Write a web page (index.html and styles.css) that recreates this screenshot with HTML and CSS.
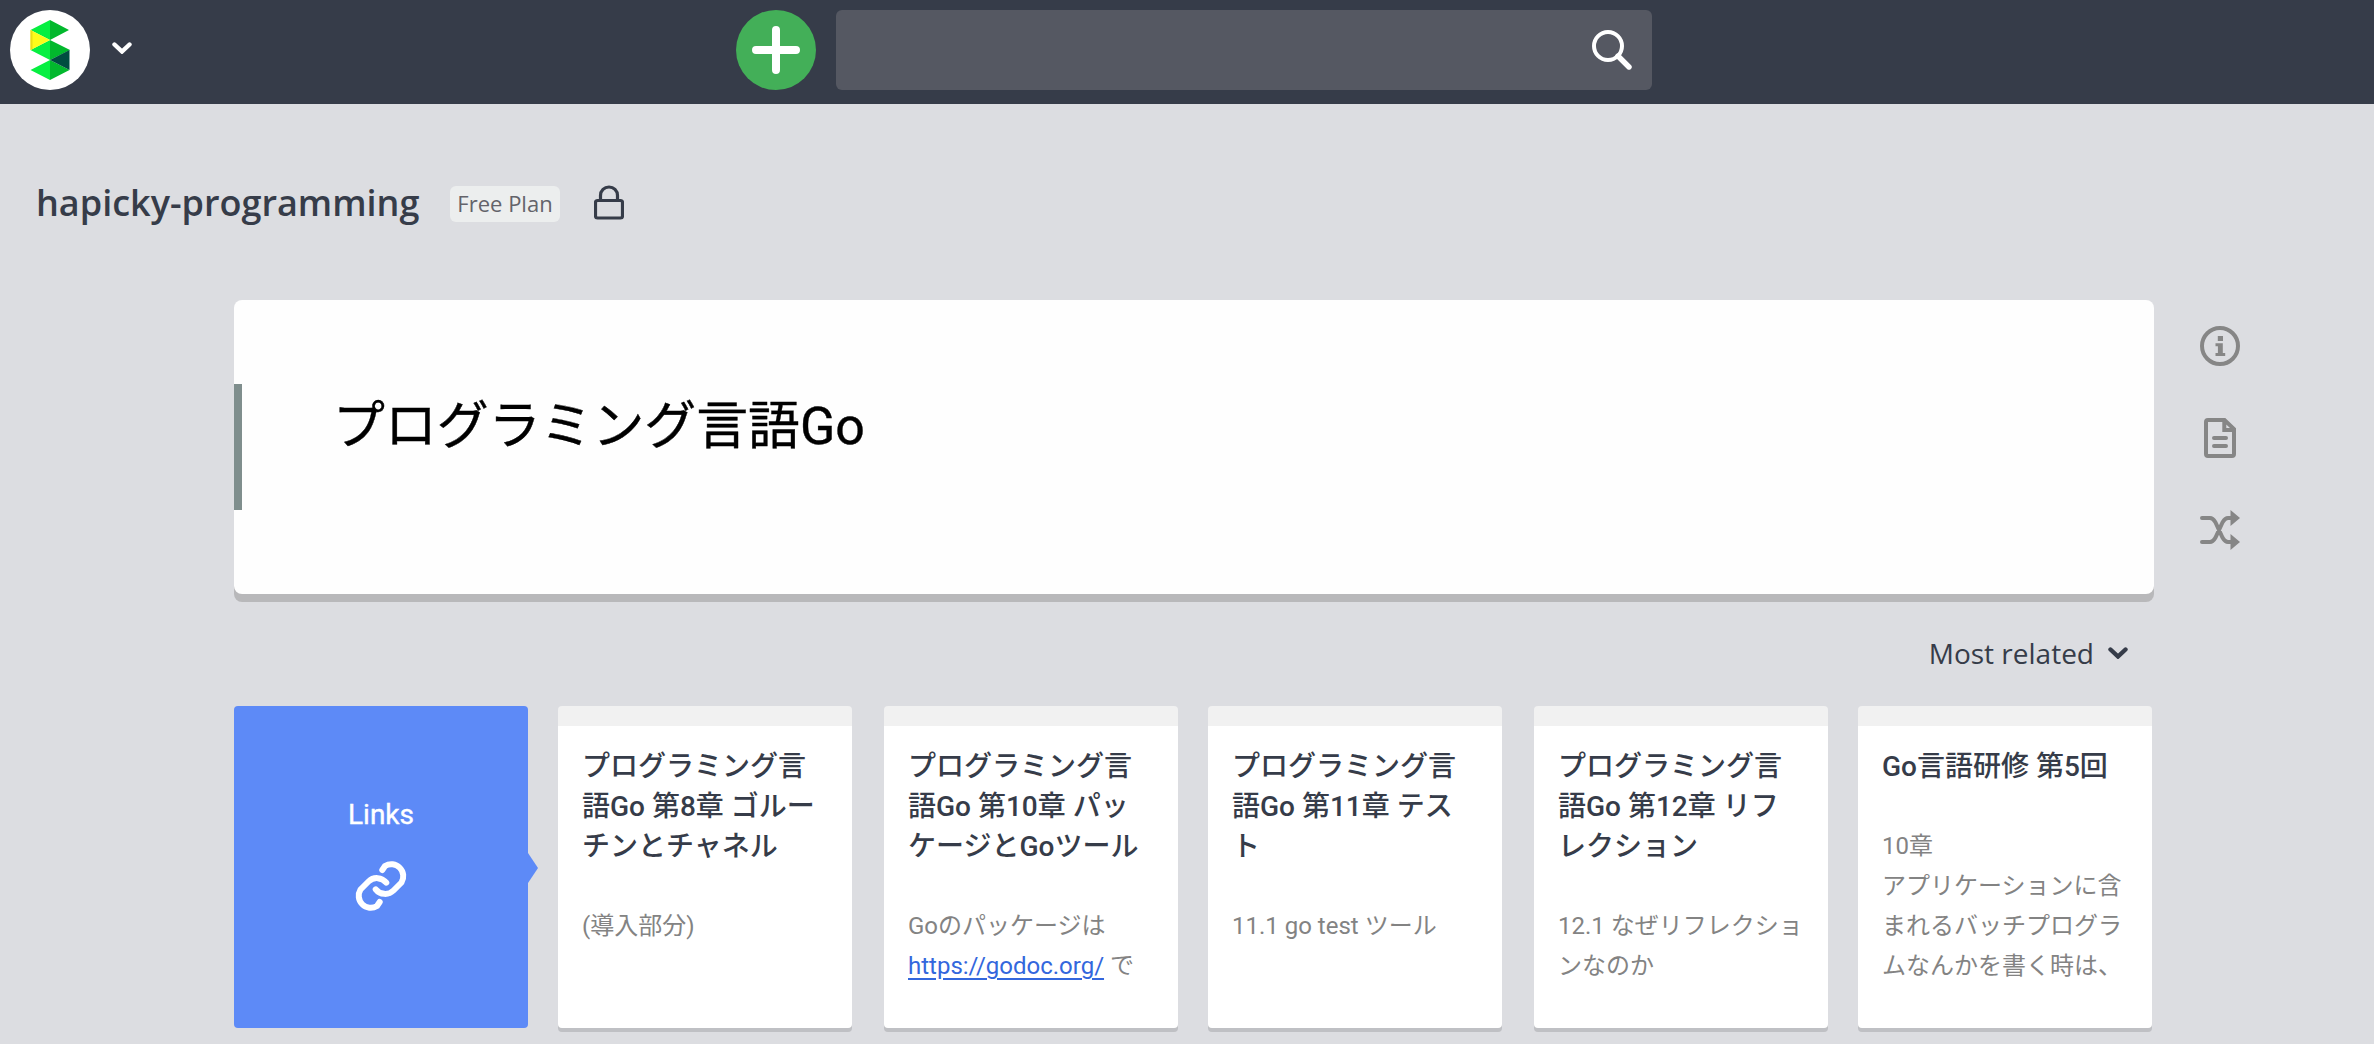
FILE: index.html
```html
<!DOCTYPE html>
<html lang="ja">
<head>
<meta charset="utf-8">
<title>プログラミング言語Go - hapicky-programming</title>
<link rel="stylesheet" href="styles.css">
</head>
<body>
<header class="navbar">
  <div class="brand">
    <svg class="logo" viewBox="0 0 80 80">
      <circle cx="40" cy="40" r="40" fill="#fff"/>
      <path fill="#06ef41" d="M40 10v20L20.500 20zM40 30v20L20.500 40zM40 50v20L20.500 60z"/>
      <path fill="#02b82d" d="M40 10v20l19-10zM40 30v20l20-10zM40 50v20l19.500-10z"/>
      <path fill="#fdfc1a" d="M20.500 20v20L40 30z"/>
      <path fill="#e8de18" d="M20.500 20v20l2-1V21z"/>
      <path fill="#004d40" d="M59.500 40v20L40 50z"/>
    </svg>
    <svg class="caret" viewBox="0 0 20 12"><path d="M2.500 2.500L10 9.500L17.500 2.500"/></svg>
  </div>
  <div class="tools">
    <button class="new-page">
      <svg viewBox="0 0 48 48"><path d="M24 4v40M4 24h40"/></svg>
    </button>
    <div class="search">
      <svg viewBox="0 0 40 40"><circle cx="16" cy="16" r="14"/><path d="M26 26l11 11"/></svg>
    </div>
  </div>
</header>

<div class="project">
  <h1 class="project-name">hapicky-programming</h1>
  <span class="plan">Free Plan</span>
  <svg class="lock" viewBox="0 0 30 36"><rect x="1.500" y="15.500" width="27" height="17.500" rx="2"/><path d="M6.500 15V10.500a8.500 8.500 0 0 1 17 0V15"/></svg>
</div>

<div class="content">
  <main class="main">
    <article class="page">
      <h2 class="page-title">プログラミング言語Go</h2>
    </article>
    <div class="sort">Most related
      <svg class="caret" viewBox="0 0 20 12"><path d="M2.500 2.500L10 9.500L17.500 2.500"/></svg>
    </div>
    <section class="grid">
      <div class="links">
        <span>Links</span>
        <svg class="links-icon" viewBox="0 0 54 54">
          <path d="M28.300 11L31 7A12 12 0 0 1 47.500 23.500L39.500 31.500A12 12 0 0 1 21.700 30.300"/>
          <path d="M25.700 43L23 47A12 12 0 0 1 6.500 30.500L14.500 22.500A12 12 0 0 1 32.300 23.700"/>
        </svg>
      </div>
      <div class="card">
        <h3>プログラミング言<br>語Go 第8章 ゴルー<br>チンとチャネル</h3>
        <p>(導入部分)</p>
      </div>
      <div class="card">
        <h3>プログラミング言<br>語Go 第10章 パッ<br>ケージとGoツール</h3>
        <p>Goのパッケージは<br><a href="#">https://godoc.org/</a> で</p>
      </div>
      <div class="card">
        <h3>プログラミング言<br>語Go 第11章 テス<br>ト</h3>
        <p>11.1 go test ツール</p>
      </div>
      <div class="card">
        <h3>プログラミング言<br>語Go 第12章 リフ<br>レクション</h3>
        <p>12.1 なぜリフレクショ<br>ンなのか</p>
      </div>
      <div class="card">
        <h3>Go言語研修 第5回</h3>
        <p>10章<br>アプリケーションに含<br>まれるバッチプログラ<br>ムなんかを書く時は、</p>
      </div>
    </section>
  </main>
  <aside class="side">
    <svg viewBox="0 0 40 40">
      <circle class="line" cx="20" cy="20" r="18"/>
      <path d="M17.800 10h5.200v5h-5.200zM15.500 17.200h7.300v9.800h2.400v3H15.500v-3h2.400v-6.800h-2.400z"/>
    </svg>
    <svg viewBox="0 0 40 40">
      <path class="line" d="M8 2h16.500L34 11v25a2 2 0 0 1-2 2H8a2 2 0 0 1-2-2V4a2 2 0 0 1 2-2zM24.300 3v9H34M14 20h12M14 28h12"/>
    </svg>
    <svg viewBox="0 0 40 40">
      <path class="line" d="M2 8h8c3 0 4 2 5.500 4.500l7 15C24 30 25 32 28 32h4M2 32h8c3 0 4-2 5.500-4.500l7-15C24 10 25 8 28 8h4"/>
      <path d="M30.500 0l9.500 8l-9.500 8zM30.500 24l9.500 8l-9.500 8z"/>
    </svg>
  </aside>
</div>
</body>
</html>
```
FILE: styles.css
```css
* { box-sizing: border-box; }

body {
  margin: 0;
  height: 1044px;
  overflow: hidden;
  background: #dcdde1;
  color: #363c49;
  font-family: "Open Sans", "Noto Sans CJK JP", sans-serif;
}

h1, h2, h3, p { margin: 0; }

.navbar {
  display: grid;
  grid-template-columns: 736px auto;
  height: 104px;
  padding-top: 10px;
  background: #363c49;
}

.brand {
  display: flex;
  align-items: flex-start;
  gap: 21.500px;
  padding-left: 10px;
}

.logo { width: 80px; height: 80px; }

.caret {
  width: 20px;
  height: 12px;
  fill: none;
  stroke: currentColor;
  stroke-width: 4.4;
  stroke-linecap: round;
}

.brand .caret { margin-top: 31.500px; color: #fff; }

.tools { display: flex; gap: 20px; }

.new-page {
  display: grid;
  place-items: center;
  width: 80px;
  height: 80px;
  padding: 0;
  border: 0;
  border-radius: 50%;
  background: #43af58;
}

.new-page svg {
  width: 48px;
  height: 48px;
  stroke: #fff;
  stroke-width: 8;
  stroke-linecap: round;
}

.search {
  display: flex;
  justify-content: flex-end;
  align-items: center;
  width: 816px;
  height: 80px;
  padding-right: 20px;
  border-radius: 6px;
  background: #555862;
}

.search svg {
  width: 40px;
  height: 40px;
  fill: none;
  stroke: #fff;
  stroke-width: 4;
  stroke-linecap: round;
}

.search path { stroke-width: 5.4; }

.project {
  display: flex;
  align-items: center;
  height: 196px;
  padding: 4px 0 0 36px;
}

.project-name {
  width: 414px;
  padding-bottom: 3px;
  font-size: 36px;
  font-weight: 600;
  line-height: 50px;
  white-space: nowrap;
}

.plan {
  width: 110px;
  height: 36px;
  border-radius: 6px;
  background: #eceeee;
  color: #63636a;
  font-size: 22px;
  line-height: 35px;
  text-align: center;
}

.lock {
  width: 30px;
  height: 36px;
  margin: -3px 0 0 34px;
  fill: none;
  stroke: #363c49;
  stroke-width: 3.2;
}

.content {
  display: flex;
  gap: 46px;
  padding-left: 234px;
}

.main { width: 1920px; }

.page {
  display: flex;
  align-items: center;
  height: 294px;
  border-radius: 8px;
  background: linear-gradient(#7f8e8d, #7f8e8d) 0 84px / 8px 126px no-repeat #fefefe;
  box-shadow: 0 8px 0 #b8b8ba;
}

.page-title {
  padding: 0 0 41px 99px;
  color: #000;
  font: 400 51.900px/76px Roboto, "Noto Sans CJK JP", sans-serif;
  -webkit-text-stroke: 0.4px #000;
}

.sort {
  display: flex;
  align-items: center;
  justify-content: flex-end;
  gap: 14px;
  height: 112px;
  padding: 6px 26px 0 0;
  font-size: 28px;
}

.grid {
  display: grid;
  grid-template-columns: 324px 326px 324px 326px 324px 294px;
  font-family: Roboto, "Noto Sans CJK JP", sans-serif;
}

.links, .card {
  width: 294px;
  height: 322px;
  border-radius: 4px;
}

.links {
  position: relative;
  display: flex;
  flex-direction: column;
  align-items: center;
  padding-top: 89px;
  background: #5d8af7;
  color: #fff;
  font-size: 28px;
  line-height: 40px;
  -webkit-text-stroke: 0.4px #fff;
}

.links::after {
  content: "";
  position: absolute;
  left: 100%;
  top: 147px;
  border-left: 10px solid #5d8af7;
  border-top: 15px solid transparent;
  border-bottom: 15px solid transparent;
}

.links-icon {
  width: 54px;
  height: 54px;
  margin-top: 24px;
  fill: none;
  stroke: #fff;
  stroke-width: 6;
  stroke-linecap: round;
}

.card {
  padding: 21px 0 0 24px;
  border-top: 20px solid #f1f1f1;
  background: #fff;
  box-shadow: 0 4px 0 #bfc0c4;
  line-height: 40px;
  white-space: nowrap;
}

.card h3 {
  margin-bottom: 39px;
  font-size: 28px;
  font-weight: 500;
  line-height: 40px;
}

.card p { color: #838383; font-size: 24px; }

.card a { color: #3367dd; text-underline-offset: 4px; }

.side {
  display: flex;
  flex-direction: column;
  gap: 52px;
  padding-top: 26px;
}

.side svg { width: 40px; height: 40px; fill: #868686; }

.side .line {
  fill: none;
  stroke: #868686;
  stroke-width: 4;
  stroke-linecap: round;
}
```
